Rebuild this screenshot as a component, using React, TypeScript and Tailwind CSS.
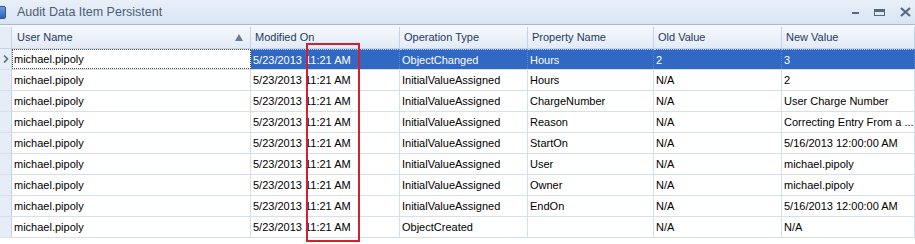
import React from "react";

type Row = {
  user: string;
  modified: string;
  op: string;
  prop: string;
  oldV: string;
  newV: string;
};

const ROWS: Row[] = [
  { user: "michael.pipoly", modified: "5/23/2013 11:21 AM", op: "ObjectChanged", prop: "Hours", oldV: "2", newV: "3" },
  { user: "michael.pipoly", modified: "5/23/2013 11:21 AM", op: "InitialValueAssigned", prop: "Hours", oldV: "N/A", newV: "2" },
  { user: "michael.pipoly", modified: "5/23/2013 11:21 AM", op: "InitialValueAssigned", prop: "ChargeNumber", oldV: "N/A", newV: "User Charge Number" },
  { user: "michael.pipoly", modified: "5/23/2013 11:21 AM", op: "InitialValueAssigned", prop: "Reason", oldV: "N/A", newV: "Correcting Entry From a ..." },
  { user: "michael.pipoly", modified: "5/23/2013 11:21 AM", op: "InitialValueAssigned", prop: "StartOn", oldV: "N/A", newV: "5/16/2013 12:00:00 AM" },
  { user: "michael.pipoly", modified: "5/23/2013 11:21 AM", op: "InitialValueAssigned", prop: "User", oldV: "N/A", newV: "michael.pipoly" },
  { user: "michael.pipoly", modified: "5/23/2013 11:21 AM", op: "InitialValueAssigned", prop: "Owner", oldV: "N/A", newV: "michael.pipoly" },
  { user: "michael.pipoly", modified: "5/23/2013 11:21 AM", op: "InitialValueAssigned", prop: "EndOn", oldV: "N/A", newV: "5/16/2013 12:00:00 AM" },
  { user: "michael.pipoly", modified: "5/23/2013 11:21 AM", op: "ObjectCreated", prop: "", oldV: "N/A", newV: "N/A" },
];

// column widths include the 1px right border
const COLS = [
  { key: "user", label: "User Name", w: "w-[239px]" },
  { key: "modified", label: "Modified On", w: "w-[149px]" },
  { key: "op", label: "Operation Type", w: "w-[128px]" },
  { key: "prop", label: "Property Name", w: "w-[126px]" },
  { key: "oldV", label: "Old Value", w: "w-[128px]" },
  { key: "newV", label: "New Value", w: "flex-1" },
] as const;

function TitleBar() {
  return (
    <div className="flex h-[24px] items-center bg-gradient-to-b from-[#e9f0f9] to-[#d9e4f3]">
      <div className="ml-[-7px] h-[13px] w-[13px] rounded-[2px] border border-[#2a5a9e] bg-gradient-to-b from-[#6f9be0] to-[#2f62b6]" />
      <span className="ml-[11px] text-[12.5px] text-[#4a5e7a]">Audit Data Item Persistent</span>
      <div className="ml-auto flex items-center gap-[15px] pr-[4px]">
        <div className="mt-[2px] h-[2px] w-[7px] bg-[#58687e]" />
        <div className="h-[7px] w-[11px] border border-[#58687e] border-t-[3px]" />
        <svg width="11" height="10" viewBox="0 0 11 10">
          <path d="M1 1 L10 9 M10 1 L1 9" stroke="#58687e" strokeWidth="2.2" />
        </svg>
      </div>
    </div>
  );
}

function Header() {
  return (
    <div className="flex h-[22px] border-b border-[#c4d2e5] bg-gradient-to-b from-[#f5f8fc] to-[#e3ebf6]">
      <div className="w-[12px] border-r border-[#c4d2e5] bg-[#e6edf7]" />
      {COLS.map((c, i) => (
        <div
          key={c.key}
          className={`${c.w} flex items-center border-r border-[#c4d2e5] ${i === 0 ? "pl-[5px]" : "pl-[4px]"} text-[11px] text-[#1e3a5f]`}
        >
          <span>{c.label}</span>
          {i === 0 && (
            <svg className="ml-auto mr-[7px]" width="8" height="7" viewBox="0 0 8 7">
              <path d="M4 0 L8 7 L0 7 Z" fill="#6b7b92" />
            </svg>
          )}
        </div>
      ))}
    </div>
  );
}

function DataRow({ row, selected }: { row: Row; selected: boolean }) {
  return (
    <div className="flex h-[21px] border-b border-[#d6dfec]">
      <div className="flex w-[12px] items-center justify-center border-r border-[#c4d2e5] bg-[#e6edf7]">
        {selected && (
          <svg width="6" height="8" viewBox="0 0 6 8">
            <path d="M1 0.5 L4.5 4 L1 7.5" stroke="#5a6c86" strokeWidth="1.6" fill="none" />
          </svg>
        )}
      </div>
      {COLS.map((c, i) => {
        const value = row[c.key];
        const isUser = i === 0;
        const cls = selected
          ? isUser
            ? "bg-white text-black border border-dotted border-[#4a4a4a] pl-[1px]"
            : "bg-[#3068c4] text-white border-t border-dotted border-t-[#c9d8f2] border-r border-r-[#5b86cf] pl-[2px]"
          : "text-black border-r border-[#d6dfec] pl-[2px]";
        return (
          <div
            key={c.key}
            className={`${c.w} flex items-center overflow-hidden whitespace-nowrap pt-[1px] text-[11px] ${cls}`}
          >
            {value}
          </div>
        );
      })}
    </div>
  );
}

export default function App() {
  return (
    <div
      className="relative h-[244px] w-[915px] overflow-hidden bg-white"
      style={{ fontFamily: '"Liberation Sans", Arial, sans-serif' }}
    >
      <TitleBar />
      <div className="h-[1px] bg-[#a7bad4]" />
      <div className="h-[2px] bg-[#f3f6fb]" />
      <Header />
      {ROWS.map((r, i) => (
        <DataRow key={i} row={r} selected={i === 0} />
      ))}
      <div className="pointer-events-none absolute left-[306px] top-[43px] h-[199px] w-[54px] border-2 border-[#d3202e]" />
    </div>
  );
}
